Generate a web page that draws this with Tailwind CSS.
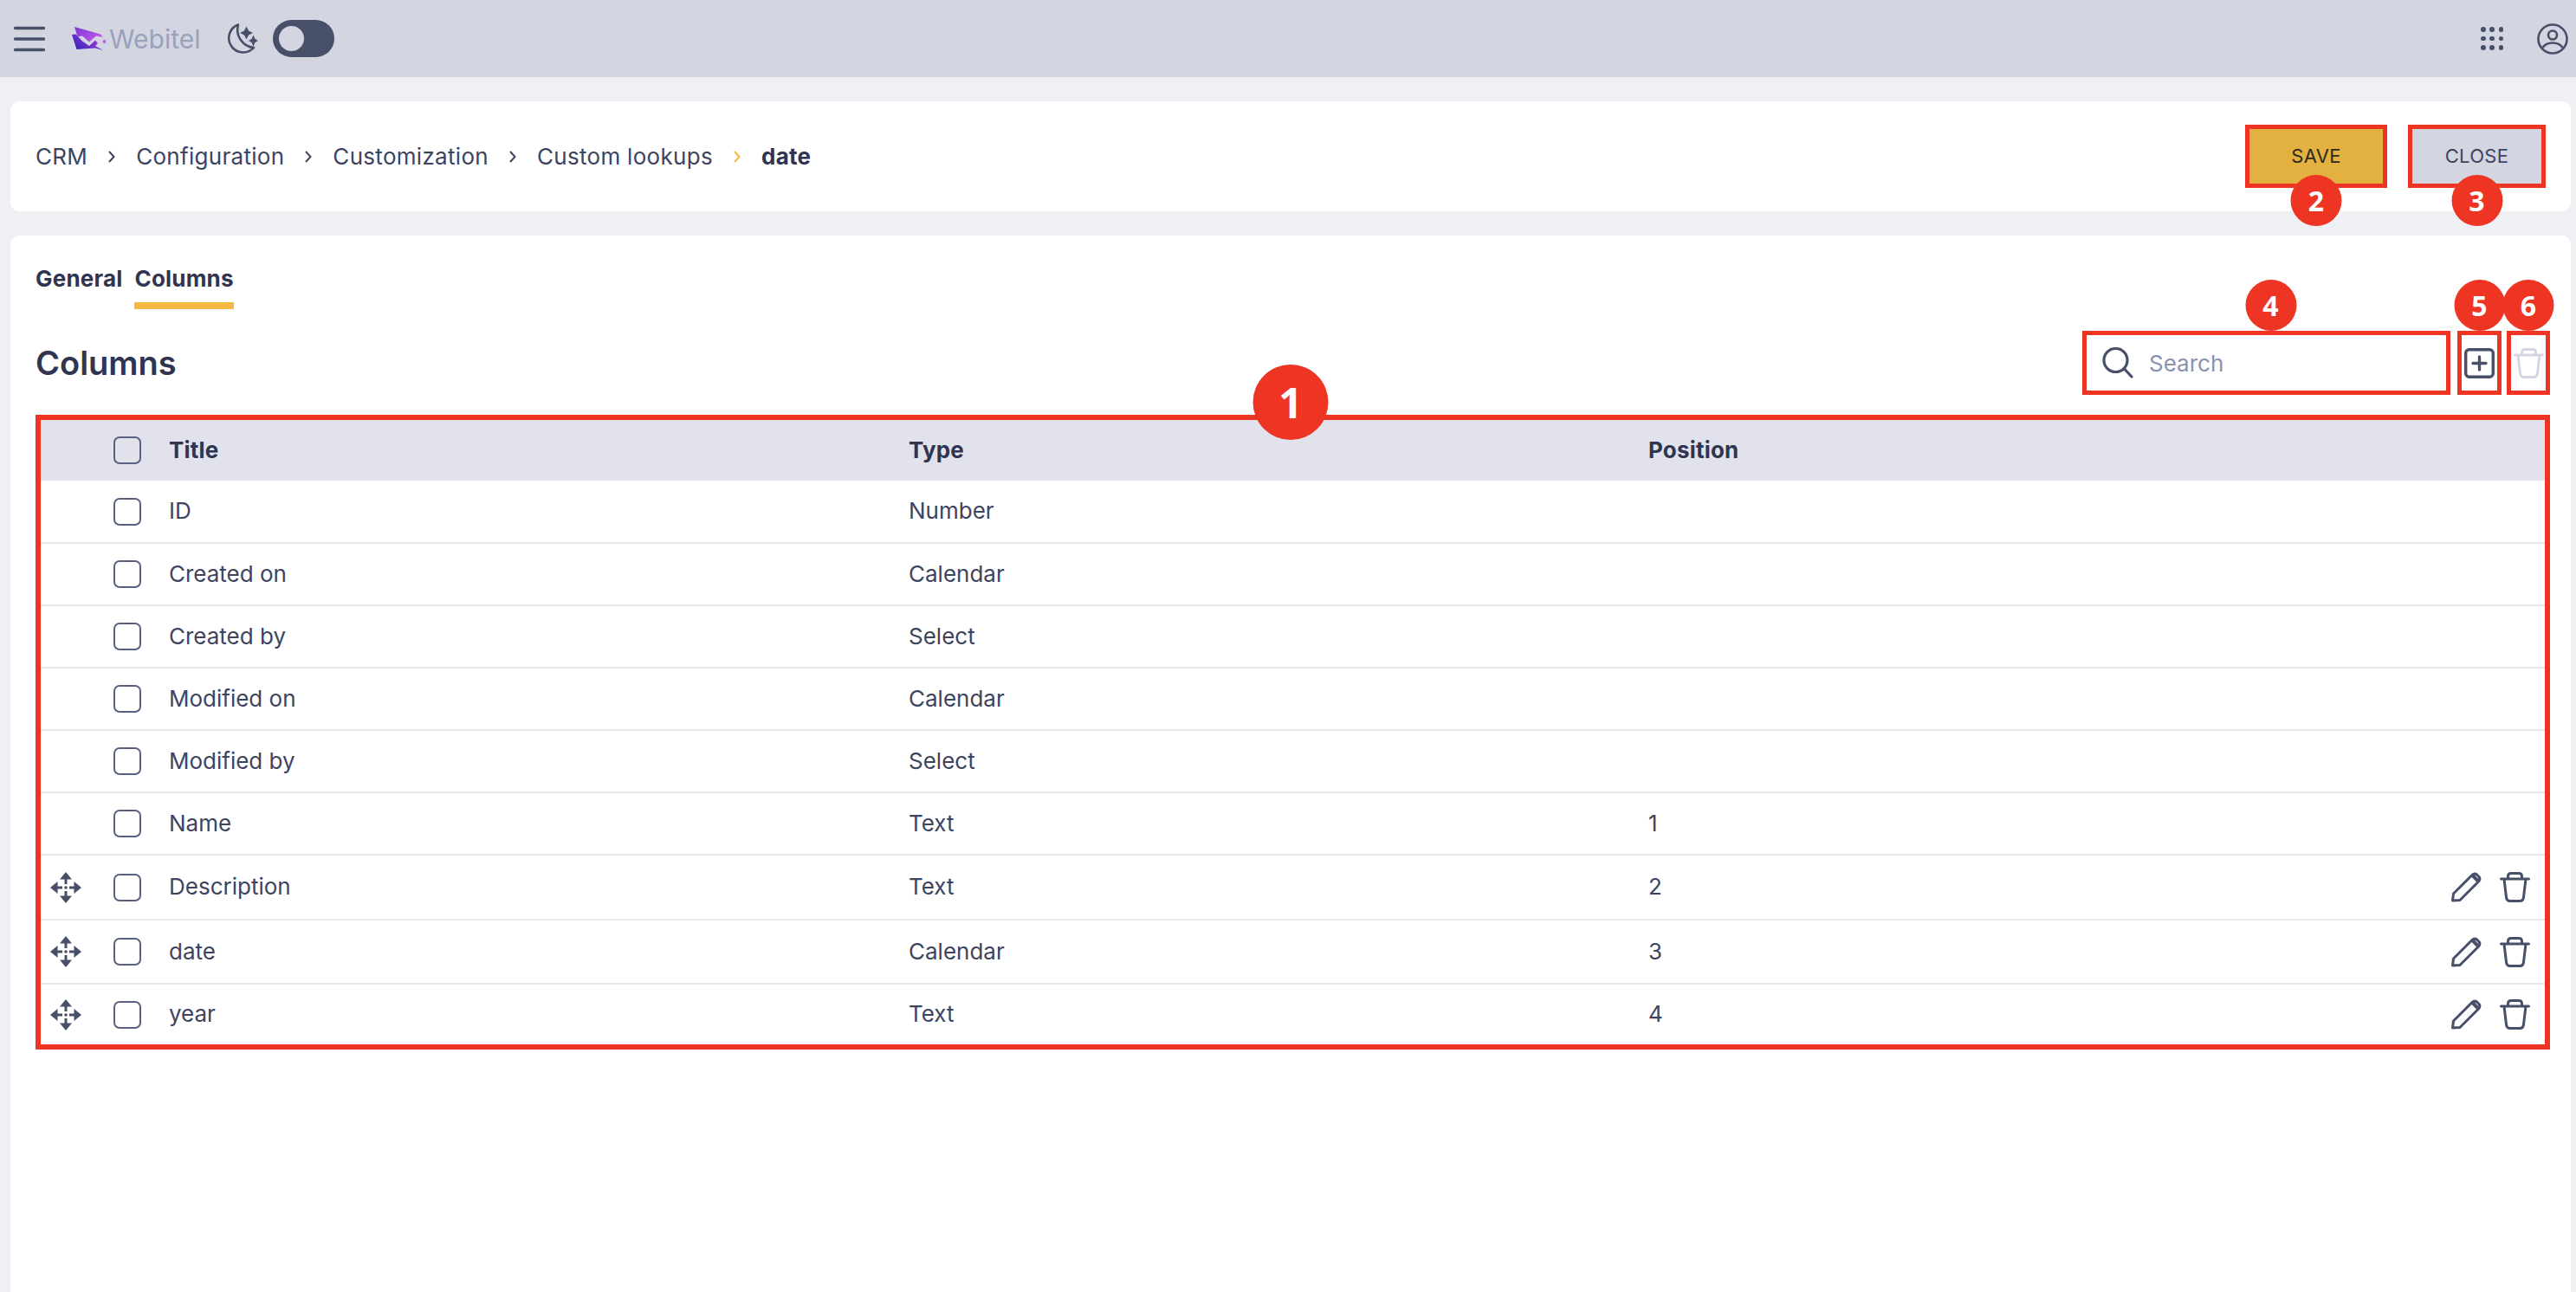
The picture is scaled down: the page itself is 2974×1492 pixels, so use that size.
<!DOCTYPE html>
<html lang="en">

<head>
    <meta charset="UTF-8">
    <title>Webitel - Custom lookups</title>
    <script src="https://cdn.jsdelivr.net/npm/@tailwindcss/browser@4"></script>
</head>

<body class="bg-[#eff0f4] font-['Inter',sans-serif] text-[#3d4460]">
    <div class="h-[1492px] flex flex-col overflow-hidden">
        <!-- top bar -->
        <header class="h-[89px] shrink-0 bg-[#d3d5e1] flex items-center text-[#474f69]">
            <svg class="ml-[16px] w-[36px] h-[30px]" viewBox="0 0 36 30" fill="none" stroke="currentColor" stroke-width="3.4" stroke-linecap="round">
                <path d="M1.5 2.5H34.5M1.5 15H34.5M1.5 27.5H34.5" />
            </svg>
            <svg class="ml-[31px] w-[40px] h-[28px]" viewBox="0 0 40 28">
                <defs>
                    <linearGradient id="logoTop" x1="0" y1="0" x2="1" y2="0.6">
                        <stop offset="0" stop-color="#7a35d8" />
                        <stop offset="1" stop-color="#c05ae8" />
                    </linearGradient>
                    <linearGradient id="logoBottom" x1="0" y1="1" x2="1" y2="0.4">
                        <stop offset="0" stop-color="#2a1fb4" />
                        <stop offset="1" stop-color="#a542dc" />
                    </linearGradient>
                </defs>
                <path fill="url(#logoTop)" d="M3 0L33 8.500L36 12L28 10.500L20 17.500L12 10.500L6.500 11.500Z" />
                <path fill="url(#logoBottom)" d="M0 9L4.500 8.500L12 16.500L20 22L27 15.500L30 19L27 22L36 27L27 24.500L5.500 26Z" />
                <circle cx="37.500" cy="17" r="2" fill="#c05ae8" />
            </svg>
            <span class="ml-[3px] text-[30px] text-[#9aa1ba] leading-none">Webitel</span>
            <svg class="ml-[31px] w-[36px] h-[36px]" viewBox="0 0 36 36" fill="none" stroke="currentColor" stroke-width="2.600">
                <path d="M13 1.500A16.500 16.500 0 1 0 31 28A21 21 0 0 1 13 1.500Z" stroke-linejoin="round" />
                <path fill="currentColor" stroke="none" d="M22.500 3.500L25 8.500L30 11L25 13.500L22.500 18.500L20 13.500L15 11L20 8.500Z" />
                <path fill="currentColor" stroke="none" d="M30.500 13.500L32.500 18L36 20L32.500 22L30.500 26.500L28.500 22L25 20L28.500 18Z" />
            </svg>
            <div class="ml-[17px] w-[71px] h-[43px] rounded-full bg-[#474f69] flex items-center pl-[7px]">
                <div class="w-[29px] h-[29px] rounded-full bg-[#d3d5e1]"></div>
            </div>
            <div class="ml-auto grid grid-cols-3 gap-[5px] w-[26px]">
                <span class="w-[5.500px] h-[5.500px] rounded-full bg-[#474f69]"></span>
                <span class="w-[5.500px] h-[5.500px] rounded-full bg-[#474f69]"></span>
                <span class="w-[5.500px] h-[5.500px] rounded-full bg-[#474f69]"></span>
                <span class="w-[5.500px] h-[5.500px] rounded-full bg-[#474f69]"></span>
                <span class="w-[5.500px] h-[5.500px] rounded-full bg-[#474f69]"></span>
                <span class="w-[5.500px] h-[5.500px] rounded-full bg-[#474f69]"></span>
                <span class="w-[5.500px] h-[5.500px] rounded-full bg-[#474f69]"></span>
                <span class="w-[5.500px] h-[5.500px] rounded-full bg-[#474f69]"></span>
                <span class="w-[5.500px] h-[5.500px] rounded-full bg-[#474f69]"></span>
            </div>
            <svg class="ml-[39px] mr-[9px] w-[36px] h-[36px]" viewBox="0 0 36 36" fill="none" stroke="currentColor" stroke-width="2.600">
                <circle cx="18" cy="18" r="16.500" />
                <circle cx="18" cy="13.500" r="5" />
                <path d="M6.500 28C9 24 13 22.500 18 22.500C23 22.500 27 24 29.500 28" />
            </svg>
        </header>

        <main class="flex-1 flex flex-col pl-[12px] pr-[6px] pt-[28px] gap-[28px] min-h-0">
            <!-- breadcrumbs and buttons -->
            <section class="h-[127px] shrink-0 bg-white rounded-[10px] flex items-center pl-[29px] pr-[29px] text-[26px] tracking-[0.3px]">
                <span>CRM</span>
                <svg class="mx-[23px] w-[10px] h-[16px]" viewBox="0 0 10 16" fill="none" stroke="#3d4460" stroke-width="2"><path d="M2 2L7.500 8L2 14" /></svg>
                <span>Configuration</span>
                <svg class="mx-[23px] w-[10px] h-[16px]" viewBox="0 0 10 16" fill="none" stroke="#3d4460" stroke-width="2"><path d="M2 2L7.500 8L2 14" /></svg>
                <span>Customization</span>
                <svg class="mx-[23px] w-[10px] h-[16px]" viewBox="0 0 10 16" fill="none" stroke="#3d4460" stroke-width="2"><path d="M2 2L7.500 8L2 14" /></svg>
                <span>Custom lookups</span>
                <svg class="mx-[23px] w-[10px] h-[16px]" viewBox="0 0 10 16" fill="none" stroke="#f4b942" stroke-width="2"><path d="M2 2L7.500 8L2 14" /></svg>
                <span class="font-bold text-[#2f3550]">date</span>

                <button class="relative ml-auto w-[164px] h-[73px] border-[5px] border-[#ee3524] bg-[#e3b140] text-[22px] text-[#2d2a20]">
                    SAVE
                    <span class="absolute left-1/2 -translate-x-1/2 top-[53px] w-[59px] h-[59px] rounded-full bg-[#ee3524] text-white font-['Open_Sans',sans-serif] font-bold text-[32px] flex items-center justify-center">2</span>
                </button>
                <button class="relative ml-[24px] w-[159px] h-[73px] border-[5px] border-[#ee3524] bg-[#d3d5e1] text-[22px] text-[#3d4460]">
                    CLOSE
                    <span class="absolute left-1/2 -translate-x-1/2 top-[53px] w-[59px] h-[59px] rounded-full bg-[#ee3524] text-white font-['Open_Sans',sans-serif] font-bold text-[32px] flex items-center justify-center">3</span>
                </button>
            </section>

            <!-- columns card -->
            <section class="flex-1 bg-white rounded-t-[10px] pl-[29px] pr-[24px]">
                <div class="flex gap-[14px] pt-[30px] text-[26px] font-bold text-[#2f3550] tracking-[0.2px]">
                    <span class="h-[55px]">General</span>
                    <span class="h-[55px] border-b-[8px] border-[#f4b942]">Columns</span>
                </div>

                <div class="flex items-center h-[74px] mt-[25px]">
                    <h2 class="text-[38px] font-semibold text-[#2f3550]">Columns</h2>
                    <div class="relative ml-auto w-[425px] h-[74px] border-[5px] border-[#ee3524] flex items-center pl-[18px]">
                        <svg class="w-[36px] h-[36px]" viewBox="0 0 36 36" fill="none" stroke="#474f69" stroke-width="3.200" stroke-linecap="round">
                            <circle cx="15.500" cy="15" r="13.500" />
                            <path d="M25.500 25L34 34" />
                        </svg>
                        <span class="ml-[18px] text-[26px] text-[#8a92b0]">Search</span>
                        <span class="absolute left-[calc(50%+5px)] -translate-x-1/2 -top-[64px] w-[59px] h-[59px] rounded-full bg-[#ee3524] text-white font-['Open_Sans',sans-serif] font-bold text-[32px] flex items-center justify-center">4</span>
                    </div>
                    <div class="relative ml-[8px] w-[51px] h-[74px] border-[5px] border-[#ee3524] flex items-center justify-center">
                        <svg class="w-[35px] h-[35px]" viewBox="0 0 35 35" fill="none" stroke="#474f69" stroke-width="3.400" stroke-linecap="round">
                            <rect x="1.700" y="1.700" width="31.600" height="31.600" rx="4" />
                            <path d="M17.500 10V25M10 17.500H25" />
                        </svg>
                        <span class="absolute left-1/2 -translate-x-1/2 -top-[64px] w-[59px] h-[59px] rounded-full bg-[#ee3524] text-white font-['Open_Sans',sans-serif] font-bold text-[32px] flex items-center justify-center">5</span>
                    </div>
                    <div class="relative ml-[6px] w-[50px] h-[74px] border-[5px] border-[#ee3524] flex items-center justify-center">
                        <svg class="w-[35px] h-[35px]" viewBox="0 0 35 35" fill="none" stroke="#d3d5e1" stroke-width="2.800" stroke-linecap="round" stroke-linejoin="round">
                            <path d="M9.500 8V5Q9.500 1.500 13 1.500H22Q25.500 1.500 25.500 5V8M1.500 8H33.500M5 8L7.500 29Q8 33.500 12 33.500H23Q27 33.500 27.500 29L30 8" />
                        </svg>
                        <span class="absolute left-1/2 -translate-x-1/2 -top-[64px] w-[59px] h-[59px] rounded-full bg-[#ee3524] text-white font-['Open_Sans',sans-serif] font-bold text-[32px] flex items-center justify-center">6</span>
                    </div>
                </div>

                <!-- table -->
                <div class="relative mt-[23px] border-[6px] border-[#ee3524]">
                    <span class="absolute left-[1443px] -top-[64px] w-[87px] h-[87px] -translate-x-1/2 rounded-full bg-[#ee3524] text-white font-['Open_Sans',sans-serif] font-bold text-[48px] flex items-center justify-center">1</span>
                    <table class="w-full table-fixed text-[26px] text-left">
                        <colgroup>
                            <col class="w-[84px]">
                            <col class="w-[64px]">
                            <col class="w-[854px]">
                            <col class="w-[854px]">
                            <col>
                        </colgroup>
                        <thead class="bg-[#e1e2ec] text-[#2f3550] tracking-[0.2px]">
                            <tr class="h-[70px]">
                                <th></th>
                                <th><div class="w-[32px] h-[32px] rounded-[7px] border-2 border-[#5a6180]"></div></th>
                                <th class="font-bold pb-[2px]">Title</th>
                                <th class="font-bold pb-[2px]">Type</th>
                                <th class="font-bold pb-[2px]">Position</th>
                            </tr>
                        </thead>
                        <tbody id="column-list"></tbody>
                    </table>
                </div>
            </section>
        </main>
    </div>

    <script>
        const rows = [
            { title: 'ID', type: 'Number', position: '', height: 'h-[72px]' },
            { title: 'Created on', type: 'Calendar', position: '', height: 'h-[72px]' },
            { title: 'Created by', type: 'Select', position: '', height: 'h-[72px]' },
            { title: 'Modified on', type: 'Calendar', position: '', height: 'h-[72px]' },
            { title: 'Modified by', type: 'Select', position: '', height: 'h-[72px]' },
            { title: 'Name', type: 'Text', position: '1', height: 'h-[72px]' },
            { title: 'Description', type: 'Text', position: '2', height: 'h-[75px]', custom: true },
            { title: 'date', type: 'Calendar', position: '3', height: 'h-[74px]', custom: true },
            { title: 'year', type: 'Text', position: '4', height: 'h-[70px]', custom: true },
        ];

        const moveIcon = `<svg class="ml-[11px] w-[36px] h-[36px]" viewBox="0 0 36 36" fill="#474f69" stroke="#474f69">
            <path stroke="none" d="M18 0L25 8.500H11ZM18 36L11 27.500H25ZM0 18L8.500 11V25ZM36 18L27.500 25V11Z" />
            <path fill="none" stroke-width="3" d="M18 8V14M18 22V28M8 18H14M22 18H28" />
            <circle cx="18" cy="18" r="1.800" stroke="none" />
        </svg>`;

        const editIcons = `<div class="flex justify-end gap-[21px] pr-[17px] pt-[2px]">
            <svg class="w-[36px] h-[35px]" viewBox="0 0 36 35" fill="none" stroke="#474f69" stroke-width="3" stroke-linejoin="round">
                <path d="M2.500 33L3.500 25L25 3.500Q28 1 30.500 3L33 5.500Q35 8 32.500 11L11 32.500Z" />
                <path stroke-width="4" d="M25.500 4L32 10.500" />
            </svg>
            <svg class="w-[35px] h-[35px]" viewBox="0 0 35 35" fill="none" stroke="#474f69" stroke-width="3" stroke-linecap="round" stroke-linejoin="round">
                <path d="M9.500 8V5Q9.500 1.500 13 1.500H22Q25.500 1.500 25.500 5V8M1.500 8H33.500M5 8L7.500 29Q8 33.500 12 33.500H23Q27 33.500 27.500 29L30 8" />
            </svg>
        </div>`;

        document.getElementById('column-list').innerHTML = rows.map((row, i) => `
            <tr class="${row.height} ${i < rows.length - 1 ? 'border-b-2 border-[#e8e9ef]' : ''}">
                <td>${row.custom ? moveIcon : ''}</td>
                <td><div class="w-[32px] h-[32px] rounded-[7px] border-2 border-[#5a6180]"></div></td>
                <td class="pb-[2px]">${row.title}</td>
                <td class="pb-[2px]">${row.type}</td>
                <td class="pb-[2px]">
                    <div class="flex items-center justify-between">
                        <span>${row.position}</span>
                        ${row.custom ? editIcons : ''}
                    </div>
                </td>
            </tr>
        `).join('');
    </script>
</body>

</html>
